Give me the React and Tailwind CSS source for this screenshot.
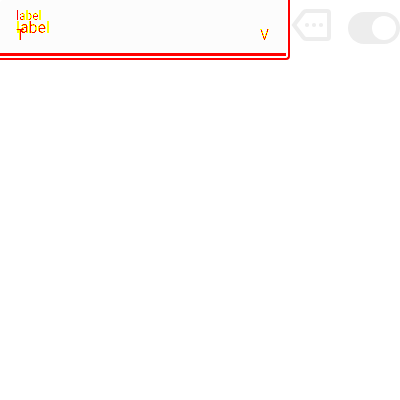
function TextInkFilter() {
  return (
    <svg className="absolute size-0" aria-hidden="true">
      <filter id="ink" x="-20%" y="-20%" width="140%" height="140%" colorInterpolationFilters="sRGB">
        <feComponentTransfer in="SourceAlpha" result="softMask">
          <feFuncA type="discrete" tableValues="0 0 0 1 1 1 1 1 1 1" />
        </feComponentTransfer>
        <feComponentTransfer in="SourceAlpha" result="coreMask">
          <feFuncA type="discrete" tableValues="0 0 0 0 0 0 0 0 1 1" />
        </feComponentTransfer>
        <feFlood floodColor="#ffff00" result="yellow" />
        <feComposite in="yellow" in2="softMask" operator="in" result="soft" />
        <feFlood floodColor="#ff0000" result="red" />
        <feComposite in="red" in2="coreMask" operator="in" result="core" />
        <feMerge>
          <feMergeNode in="soft" />
          <feMergeNode in="core" />
        </feMerge>
      </filter>
    </svg>
  );
}

export default function App() {
  return (
    <main className="flex h-[400px] w-[400px] items-start overflow-hidden bg-white font-['Roboto',sans-serif]">
      <TextInkFilter />
      <section className="h-[60px] w-[290px] shrink-0 rounded-br-[4px] border-r-2 border-b-2 border-[#ff0000] bg-white">
        <div className="h-[56px] w-[286px] rounded-tl-[4px] border-b-[3px] border-[#ff0000] bg-[#fcfcfc] pt-[9px] pl-[16px]">
          <div className="h-[11px] w-[40px] text-[12px] leading-[14px] text-black [filter:url(#ink)]">label</div>
          <div className="h-[8px] w-[50px] text-[16px] leading-[16px] text-black [filter:url(#ink)]">label</div>
          <div className="flex justify-between pr-[17px] text-[14px] leading-[14px] text-black">
            <span className="[filter:url(#ink)]">T</span>
            <span className="[filter:url(#ink)]">V</span>
          </div>
        </div>
      </section>
      <svg className="mt-[8px] ml-px h-[34px] w-[41px] shrink-0" viewBox="291 8 41 34" fill="none">
        <path d="M306.5 11H327Q329 11 329 13V37Q329 39 327 39H306.5Q304.5 39 303.4 37.5L294 25L303.4 12.5Q304.5 11 306.5 11Z" stroke="#ededed" strokeWidth="4" />
        <circle cx="307" cy="25" r="2.1" fill="#ededed" />
        <circle cx="314" cy="25" r="2.1" fill="#ededed" />
        <circle cx="321" cy="25" r="2.1" fill="#ededed" />
      </svg>
      <div className="mt-[12px] ml-[16px] flex h-[32px] w-[52px] shrink-0 items-center justify-end rounded-full bg-[#ededed] pr-[4px]">
        <div className="size-[24px] rounded-full bg-white" />
      </div>
    </main>
  );
}
